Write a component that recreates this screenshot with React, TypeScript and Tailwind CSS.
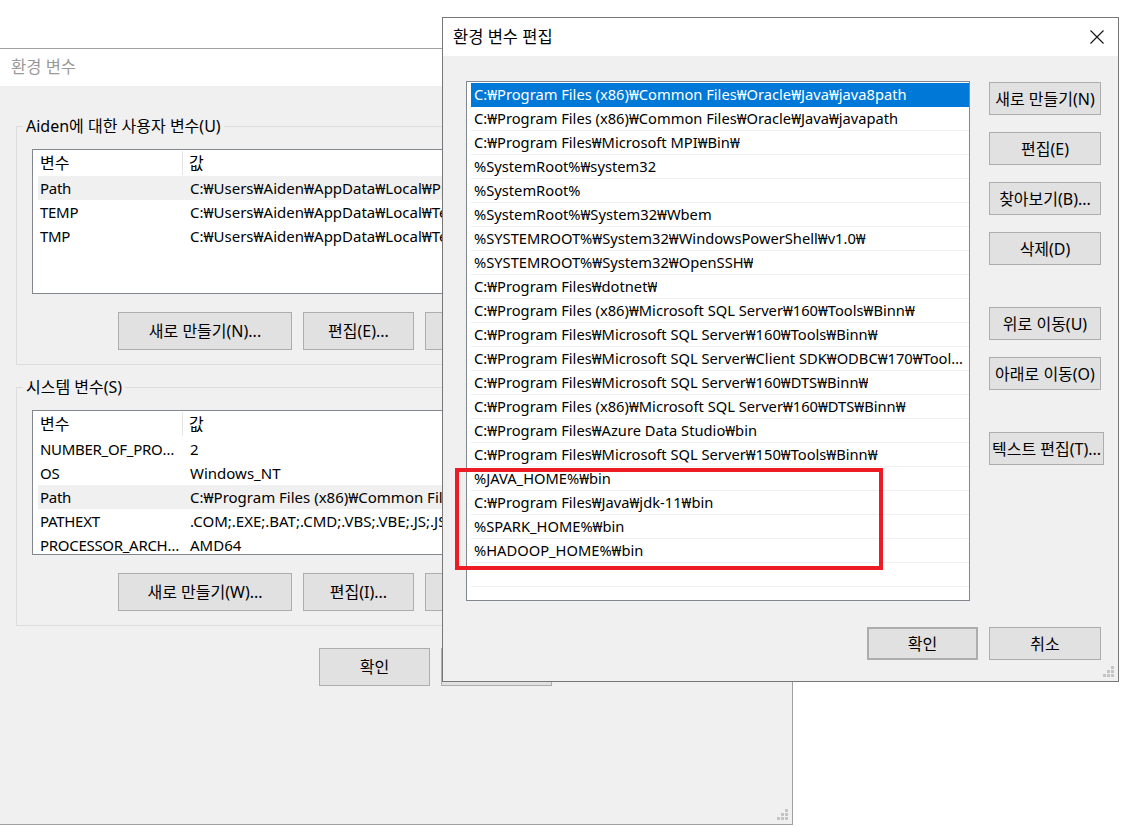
import React from 'react';

const pathRows = [
  'C:₩Program Files (x86)₩Common Files₩Oracle₩Java₩java8path',
  'C:₩Program Files (x86)₩Common Files₩Oracle₩Java₩javapath',
  'C:₩Program Files₩Microsoft MPI₩Bin₩',
  '%SystemRoot%₩system32',
  '%SystemRoot%',
  '%SystemRoot%₩System32₩Wbem',
  '%SYSTEMROOT%₩System32₩WindowsPowerShell₩v1.0₩',
  '%SYSTEMROOT%₩System32₩OpenSSH₩',
  'C:₩Program Files₩dotnet₩',
  'C:₩Program Files (x86)₩Microsoft SQL Server₩160₩Tools₩Binn₩',
  'C:₩Program Files₩Microsoft SQL Server₩160₩Tools₩Binn₩',
  'C:₩Program Files₩Microsoft SQL Server₩Client SDK₩ODBC₩170₩Tools₩Binn₩',
  'C:₩Program Files₩Microsoft SQL Server₩160₩DTS₩Binn₩',
  'C:₩Program Files (x86)₩Microsoft SQL Server₩160₩DTS₩Binn₩',
  'C:₩Program Files₩Azure Data Studio₩bin',
  'C:₩Program Files₩Microsoft SQL Server₩150₩Tools₩Binn₩',
  '%JAVA_HOME%₩bin',
  'C:₩Program Files₩Java₩jdk-11₩bin',
  '%SPARK_HOME%₩bin',
  '%HADOOP_HOME%₩bin',
  '',
  '',
];

const userVars = [
  ['Path', 'C:₩Users₩Aiden₩AppData₩Local₩Programs₩Python₩Python310₩Scripts₩'],
  ['TEMP', 'C:₩Users₩Aiden₩AppData₩Local₩Temp'],
  ['TMP', 'C:₩Users₩Aiden₩AppData₩Local₩Temp'],
];

const systemVars = [
  ['NUMBER_OF_PROCESSORS', '2'],
  ['OS', 'Windows_NT'],
  ['Path', 'C:₩Program Files (x86)₩Common Files₩Oracle₩Java₩java8path;C:₩Program Files'],
  ['PATHEXT', '.COM;.EXE;.BAT;.CMD;.VBS;.VBE;.JS;.JSE;.WSF;.WSH;.MSC'],
  ['PROCESSOR_ARCHITECTURE', 'AMD64'],
];

const Btn = ({ label, className = '' }: { label: string; className?: string }) => (
  <div
    className={`flex shrink-0 items-center justify-center border border-[#adadad] bg-[#e1e1e1] text-[16px] text-black whitespace-nowrap ${className}`}
  >
    {label}
  </div>
);

const Grip = ({ className = '' }: { className?: string }) => (
  <svg width="11" height="11" viewBox="0 0 11 11" className={className}>
    <rect x="8" y="0" width="3" height="3" fill="#c4c4c4" />
    <rect x="4" y="4" width="3" height="3" fill="#c4c4c4" />
    <rect x="8" y="4" width="3" height="3" fill="#c4c4c4" />
    <rect x="0" y="8" width="3" height="3" fill="#c4c4c4" />
    <rect x="4" y="8" width="3" height="3" fill="#c4c4c4" />
    <rect x="8" y="8" width="3" height="3" fill="#c4c4c4" />
  </svg>
);

// 변수 / 값 list view used twice in the back window
const VarList = ({ rows, selected }: { rows: string[][]; selected: number }) => (
  <div className="h-[145px] border border-[#828790] bg-white overflow-hidden">
    <div className="flex h-[26px] items-center">
      <div className="w-[150px] pl-[7px] border-r border-[#e5e5e5] h-[24px] flex items-center text-[16px]">변수</div>
      <div className="pl-[6px] text-[16px]">값</div>
    </div>
    {rows.map(([k, v], i) => (
      <div
        key={k}
        className={`ml-[5px] flex h-[24px] items-center ${i === selected ? 'bg-[#f0f0f0]' : ''}`}
      >
        <div className="w-[145px] pl-[2px] truncate tracking-[-0.3px]">{k}</div>
        <div className="pl-[7px] whitespace-nowrap">{v}</div>
      </div>
    ))}
  </div>
);

const GroupBox = ({ title, children }: { title: string; children: React.ReactNode }) => (
  <div className="relative mx-[16px] border border-[#dcdcdc] px-[15px] pt-[22px] pb-[14px]">
    <span className="absolute left-[6px] top-[-11px] bg-[#f0f0f0] px-[3px] text-[16px] leading-[20px]">{title}</span>
    {children}
  </div>
);

export default function App() {
  return (
    <div className="relative h-[827px] w-[1125px] overflow-hidden bg-white text-[15px] text-black font-['Noto_Sans','Noto_Sans_CJK_KR',sans-serif]">
      {/* back window: 환경 변수 */}
      <div className="absolute left-[-1px] top-[48px] flex h-[777px] w-[794px] flex-col border border-[#a0a0a0]">
        <div className="flex h-[37px] items-center bg-white pl-[11px] text-[16.5px] text-[#9a9a9a]">환경 변수</div>
        <div className="relative flex flex-1 flex-col bg-[#f0f0f0] pt-[40px]">
          <GroupBox title="Aiden에 대한 사용자 변수(U)">
            <VarList rows={userVars} selected={0} />
            <div className="mt-[18px] ml-[86px] flex gap-[11px]">
              <Btn label="새로 만들기(N)..." className="h-[38px] w-[174px]" />
              <Btn label="편집(E)..." className="h-[38px] w-[111px]" />
              <Btn label="삭제(D)" className="h-[38px] w-[111px]" />
            </div>
          </GroupBox>
          <div className="h-[22px]" />
          <GroupBox title="시스템 변수(S)">
            <VarList rows={systemVars} selected={2} />
            <div className="mt-[18px] ml-[86px] flex gap-[11px]">
              <Btn label="새로 만들기(W)..." className="h-[38px] w-[174px]" />
              <Btn label="편집(I)..." className="h-[38px] w-[111px]" />
              <Btn label="삭제(L)" className="h-[38px] w-[111px]" />
            </div>
          </GroupBox>
          <div className="mt-[22px] ml-[319px] flex gap-[11px]">
            <Btn label="확인" className="h-[38px] w-[111px]" />
            <Btn label="취소" className="h-[38px] w-[111px]" />
          </div>
          <Grip className="absolute right-[4px] bottom-[4px]" />
        </div>
      </div>

      {/* front dialog: 환경 변수 편집 */}
      <div className="absolute left-[442px] top-[17px] flex h-[665px] w-[677px] flex-col border border-[#777777]">
        <div className="flex h-[38px] items-center justify-between bg-white pl-[10px] pr-[14px]">
          <span className="text-[16.5px]">환경 변수 편집</span>
          <svg width="14" height="14" viewBox="0 0 14 14">
            <path d="M0.5 0.5 L13.5 13.5 M13.5 0.5 L0.5 13.5" stroke="#111" strokeWidth="1.1" fill="none" />
          </svg>
        </div>
        <div className="relative flex flex-1 flex-col bg-[#f0f0f0] pl-[23px] pr-[14px] pt-[25px]">
          <div className="flex">
            <div className="h-[520px] w-[504px] shrink-0 overflow-hidden border border-[#828790] bg-white pl-[4px] pt-[1px] text-[14.7px]">
              {pathRows.map((r, i) => (
                <div
                  key={i}
                  className={`flex h-[24px] items-center border-b pl-[3px] pr-[2px] ${
                    i === 0 ? 'border-[#0078d7] bg-[#0078d7] text-white' : 'border-[#f0f0f0]'
                  }`}
                >
                  <span className="truncate">{r}</span>
                </div>
              ))}
            </div>
            <div className="ml-[19px] flex flex-col">
              <Btn label="새로 만들기(N)" className="h-[33px] w-[112px] mt-[1px]" />
              <Btn label="편집(E)" className="h-[33px] w-[112px] mt-[17px]" />
              <Btn label="찾아보기(B)..." className="h-[33px] w-[112px] mt-[17px]" />
              <Btn label="삭제(D)" className="h-[33px] w-[112px] mt-[17px]" />
              <Btn label="위로 이동(U)" className="h-[33px] w-[112px] mt-[42px]" />
              <Btn label="아래로 이동(O)" className="h-[33px] w-[112px] mt-[17px]" />
              <Btn label="텍스트 편집(T)..." className="h-[33px] w-[115px] mt-[42px]" />
            </div>
          </div>
          <div className="mt-[26px] flex justify-end gap-[11px] pr-[3px]">
            <Btn label="확인" className="h-[33px] w-[111px] border-2 border-[#0078d7]" />
            <Btn label="취소" className="h-[33px] w-[112px]" />
          </div>
          <Grip className="absolute right-[4px] bottom-[4px]" />
        </div>
        {/* highlight box drawn over the list */}
        <div className="absolute left-[12px] top-[450px] h-[102px] w-[428px] border-[4px] border-[#ed1c24]" />
      </div>
    </div>
  );
}
